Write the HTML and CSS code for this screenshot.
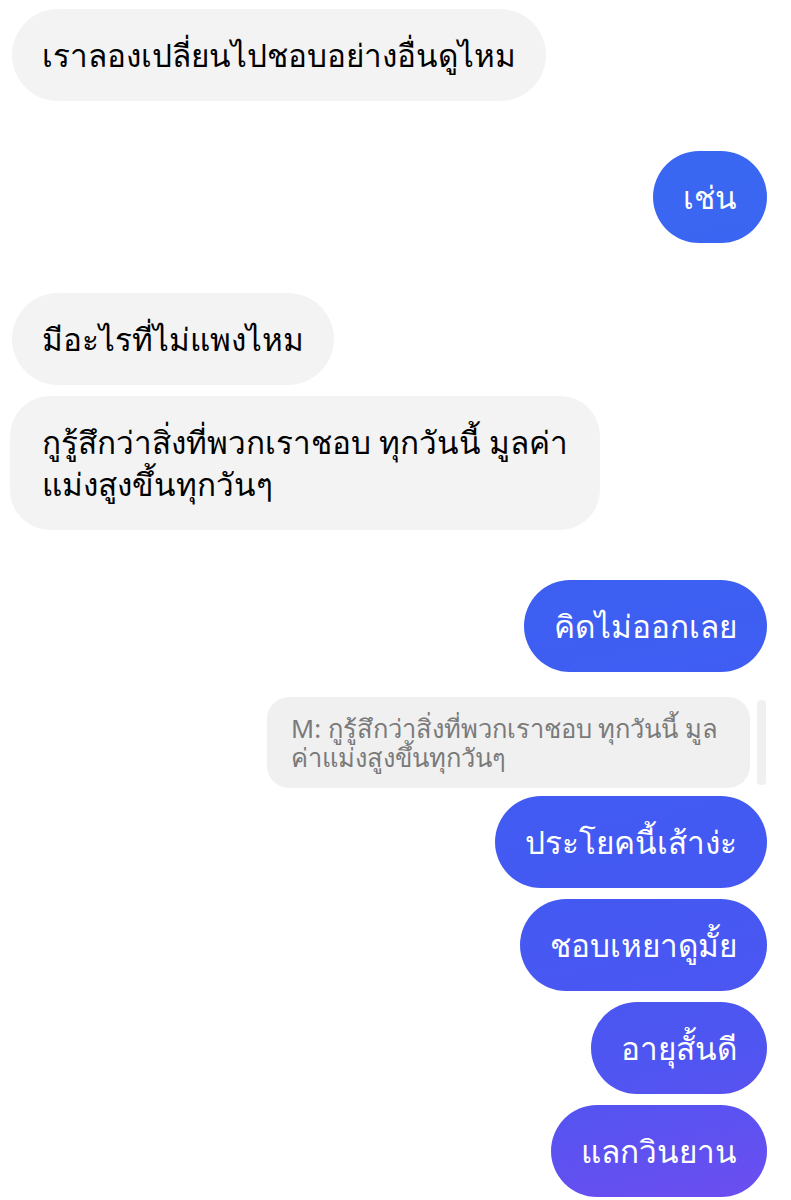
FILE: index.html
```html
<!DOCTYPE html>
<html lang="th">
<head>
    <meta charset="UTF-8">
    <meta name="viewport" content="width=device-width, initial-scale=1.0">
    <title>Chat</title>
    <link rel="stylesheet" href="styles.css">
</head>
<body>
    <div class="chat">
        <div class="group">
            <div class="msg them">เราลองเปลี่ยนไปชอบอย่างอื่นดูไหม</div>
        </div>

        <div class="group">
            <div class="msg me">เช่น</div>
        </div>

        <div class="group">
            <div class="msg them">มีอะไรที่ไม่แพงไหม</div>
            <div class="msg them wide">กูรู้สึกว่าสิ่งที่พวกเราชอบ ทุกวันนี้ มูลค่า<br>แม่งสูงขึ้นทุกวันๆ</div>
        </div>

        <div class="group">
            <div class="msg me">คิดไม่ออกเลย</div>
            <div class="reply">
                <div class="quote">M: กูรู้สึกว่าสิ่งที่พวกเราชอบ ทุกวันนี้ มูล<br>ค่าแม่งสูงขึ้นทุกวันๆ</div>
                <div class="quote-bar"></div>
            </div>
            <div class="msg me">ประโยคนี้เส้าง่ะ</div>
            <div class="msg me">ชอบเหยาดูมั้ย</div>
            <div class="msg me">อายุสั้นดี</div>
            <div class="msg me">แลกวินยาน</div>
        </div>
    </div>
</body>
</html>
```

FILE: styles.css
```css
body {
    margin: 0;
    background: #fff;
    font-family: "Noto Sans", "DejaVu Sans", sans-serif;
    color: #000;
}

.chat {
    display: flex;
    flex-direction: column;
    gap: 50px;
    padding: 9px 24px 0 10px;
}

.group {
    display: flex;
    flex-direction: column;
    gap: 11px;
}

.msg {
    font-size: 31.5px;
    line-height: 42px;
    padding: 25px 30px;
    border-radius: 46px;
    max-width: 540px;
}

.them {
    align-self: flex-start;
    background-color: #f3f3f3;
    margin-left: 2px;
}

.them.wide {
    border-radius: 40px;
    margin-left: 0;
    padding: 25px 32px;
}

.me {
    align-self: flex-end;
    color: #fff;
    background: linear-gradient(168deg, #386df2 0%, #3c60f2 50%, #4459f2 75%, #4f55f1 88%, #6e4df0 100%);
    background-attachment: fixed;
}

.reply {
    align-self: flex-end;
    display: flex;
    gap: 7px;
    margin-top: 14px;
    margin-bottom: -3px;
}

.quote {
    background-color: #f0f0f0;
    color: #7a7a7a;
    font-size: 25.5px;
    line-height: 29px;
    padding: 17px 22px 16px 24px;
    border-radius: 22px;
    width: 437px;
}

.quote-bar {
    width: 9px;
    margin: 3px 1px 3px 0;
    border-radius: 4px;
    background-color: #f0f0f0;
}
```
